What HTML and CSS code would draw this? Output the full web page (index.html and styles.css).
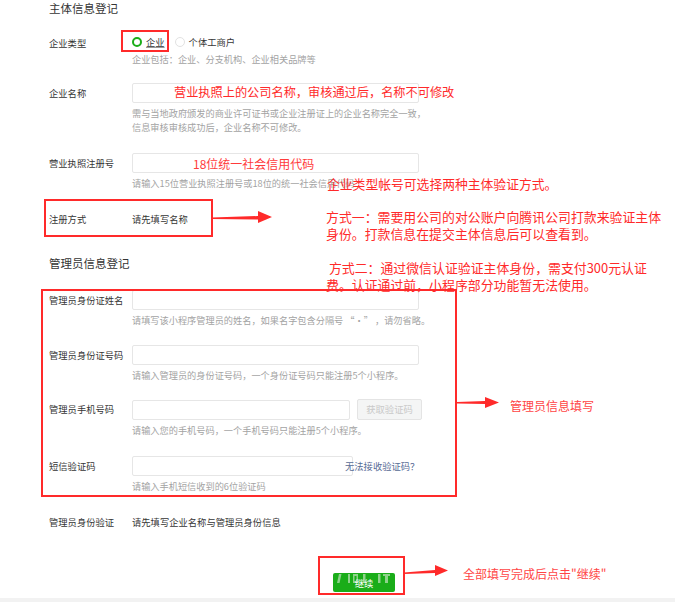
FILE: index.html
```html
<!DOCTYPE html>
<html lang="zh-CN">
<head>
<meta charset="utf-8">
<title>主体信息登记</title>
<link rel="stylesheet" href="styles.css">
</head>
<body>
<div class="page">
  <div class="form">
    <h2 class="sec-title">主体信息登记</h2>

    <div class="row row-type">
      <div class="label label-sm">企业类型</div>
      <div class="field">
        <div class="radios">
          <span class="radio radio-on"></span><span class="radio-text radio-text-on">企业</span>
          <span class="radio radio-off"></span><span class="radio-text">个体工商户</span>
        </div>
        <p class="hint hint-first">企业包括：企业、分支机构、企业相关品牌等</p>
      </div>
    </div>

    <div class="row row-name">
      <div class="label">企业名称</div>
      <div class="field">
        <div class="input"></div>
        <p class="hint">需与当地政府颁发的商业许可证书或企业注册证上的企业名称完全一致，<br>信息审核审核成功后，企业名称不可修改。</p>
      </div>
    </div>

    <div class="row">
      <div class="label">营业执照注册号</div>
      <div class="field">
        <div class="input"></div>
        <p class="hint">请输入15位营业执照注册号或18位的统一社会信用代码</p>
      </div>
    </div>

    <div class="row">
      <div class="label">注册方式</div>
      <div class="field"><div class="value">请先填写名称</div></div>
    </div>

    <h2 class="sec-title sec-title-2">管理员信息登记</h2>

    <div class="row row-admin">
      <div class="label">管理员身份证姓名</div>
      <div class="field">
        <div class="input"></div>
        <p class="hint">请填写该小程序管理员的姓名，如果名字包含分隔号 “·” ，请勿省略。</p>
      </div>
    </div>

    <div class="row row-admin2">
      <div class="label">管理员身份证号码</div>
      <div class="field">
        <div class="input"></div>
        <p class="hint">请输入管理员的身份证号码，一个身份证号码只能注册5个小程序。</p>
      </div>
    </div>

    <div class="row row-admin3">
      <div class="label">管理员手机号码</div>
      <div class="field">
        <div class="inline">
          <div class="input input-phone"></div>
          <div class="code-btn">获取验证码</div>
        </div>
        <p class="hint">请输入您的手机号码，一个手机号码只能注册5个小程序。</p>
      </div>
    </div>

    <div class="row">
      <div class="label">短信验证码</div>
      <div class="field">
        <div class="inline">
          <div class="input input-sms"></div>
          <a class="link">无法接收验证码？</a>
        </div>
        <p class="hint">请输入手机短信收到的6位验证码</p>
      </div>
    </div>

    <div class="row">
      <div class="label">管理员身份验证</div>
      <div class="field"><div class="value">请先填写企业名称与管理员身份信息</div></div>
    </div>

    <div class="actions">
      <div class="btn-go">
        <svg class="btn-noise" width="62" height="19" viewBox="0 0 62 19">
          <g fill="#8fd28b">
            <polygon points="6,1 8.5,1 6.5,10 4,10"/>
            <rect x="15" y="1" width="2" height="9"/>
            <rect x="20" y="1" width="5" height="9"/>
            <rect x="21.5" y="3" width="2" height="5" fill="#1aad19"/>
            <rect x="30" y="1" width="2.5" height="9"/>
            <rect x="45" y="1" width="2.5" height="9"/>
            <polygon points="50,1 57,1 57,3 55,3 55,10 52,10 52,3 50,3"/>
          </g>
        </svg>
        <span class="btn-text">继续</span>
      </div>
    </div>
  </div>
  <div class="band"></div>

  <!-- annotations -->
  <div class="mark mark-type"></div>
  <div class="mark mark-method"></div>
  <div class="mark mark-admin"></div>
  <div class="mark mark-btn"></div>

  <p class="note note-name">营业执照上的公司名称，审核通过后，名称不可修改</p>
  <p class="note note-code">18位统一社会信用代码</p>
  <p class="note note-kind">企业类型帐号可选择两种主体验证方式。</p>
  <p class="note note-way1">方式一：需要用公司的对公账户向腾讯公司打款来验证主体<br>身份。打款信息在提交主体信息后可以查看到。</p>
  <p class="note note-way2">&nbsp;方式二：通过微信认证验证主体身份，需支付300元认证<br>费。认证通过前，小程序部分功能暂无法使用。</p>
  <p class="note note-admin">管理员信息填写</p>
  <p class="note note-go">全部填写完成后点击"继续"</p>

  <svg class="arrow arrow-1" width="62" height="16" viewBox="0 0 62 16">
    <polygon points="0,7.5 46,6 46,1 60,7 46,13 46,9.5 0,9" fill="#ff2a2a"/>
  </svg>
  <svg class="arrow arrow-2" width="44" height="14" viewBox="0 0 44 14">
    <polygon points="0,6 28,5 28,1 42,6.5 28,12 28,8 0,7.5" fill="#ff2a2a"/>
  </svg>
  <svg class="arrow arrow-3" width="46" height="14" viewBox="0 0 46 14">
    <polygon points="0,8.5 31,6 31,1 44,6.5 31,12 31,9 0,10" fill="#ff2a2a"/>
  </svg>
</div>
</body>
</html>
```

FILE: styles.css
```css
* { box-sizing: border-box; }
html, body { margin: 0; padding: 0; background: #fff; }
body {
  font-family: "Noto Sans CJK SC", "Noto Sans", sans-serif;
  color: #353535;
  overflow: hidden;
}
.page {
  position: relative;
  width: 675px;
  height: 602px;
  overflow: hidden;
}
.form { padding-left: 49px; }

.sec-title {
  margin: 0;
  font-size: 11.5px;
  font-weight: normal;
  line-height: 16px;
  color: #353535;
}
.sec-title-2 { margin-top: 26px; }

.row {
  display: grid;
  grid-template-columns: 83px 1fr;
  margin-top: 19px;
}
.row-type { margin-top: 18px; }
.row-name { margin-top: 17px; }
.row-admin2 { margin-top: 18px; }
.row-admin3 { margin-top: 17px; }

.label {
  font-size: 9.3px;
  line-height: 20px;
  color: #353535;
  white-space: nowrap;
}
.label-sm { line-height: 18px; }
.value {
  font-size: 9.3px;
  line-height: 20px;
  color: #353535;
}

.radios {
  display: flex;
  align-items: center;
  height: 16px;
  font-size: 9.3px;
}
.radio {
  width: 10px;
  height: 10px;
  border-radius: 50%;
  flex: none;
}
.radio-on { border: 2.5px solid #1aad19; background: #fff; }
.radio-off { border: 1px solid #e2e2e2; background: #fff; margin-left: 10px; }
.radio-text { margin-left: 4px; color: #353535; }
.radio-text-on { text-decoration: underline; text-decoration-color: #999; }

.input {
  width: 287px;
  height: 20px;
  border: 1px solid #e6e6e6;
  border-radius: 2px;
  background: #fff;
}
.inline { display: flex; align-items: center; }
.input-phone { width: 218px; }
.input-sms { width: 221px; }
.code-btn {
  width: 65px;
  height: 21px;
  margin-left: 7px;
  border: 1px solid #e4e4e4;
  border-radius: 2px;
  background: #f4f5f5;
  color: #c9c9c9;
  font-size: 9.3px;
  line-height: 19px;
  text-align: center;
}
.link {
  margin-left: -8px;
  font-size: 9.3px;
  color: #576b95;
  white-space: nowrap;
}

.hint {
  margin: 3px 0 0;
  font-size: 9.2px;
  line-height: 14px;
  color: #a3a3a3;
  white-space: nowrap;
}
.hint-first { margin-top: 2px; }

.actions {
  margin-top: 41px;
  padding-left: 284px;
}
.btn-go {
  position: relative;
  display: flex;
  align-items: center;
  justify-content: center;
  width: 62px;
  height: 19px;
  border-radius: 2px;
  background: #1aad19;
  font-size: 9.3px;
  line-height: 19px;
}
.btn-noise { position: absolute; left: 0; top: 0; }
.btn-text {
  position: relative;
  top: 1px;
  color: #fff;
}
.band {
  position: absolute;
  left: 0;
  right: 0;
  bottom: 0;
  height: 4px;
  background: #f2f2f2;
}

/* annotation overlays */
.mark {
  position: absolute;
  border: 2px solid #ff2a2a;
}
.mark-type { left: 121px; top: 30px; width: 48px; height: 22px; }
.mark-method { left: 44px; top: 199px; width: 169px; height: 38px; }
.mark-admin { left: 41px; top: 289px; width: 416px; height: 208px; }
.mark-btn { left: 318px; top: 556px; width: 87px; height: 39px; }

.note {
  position: absolute;
  margin: 0;
  color: #ff2a2a;
  font-size: 13px;
  line-height: 17px;
  white-space: nowrap;
}
.note-name { left: 174px; top: 84px; font-size: 12.2px; }
.note-code { left: 193px; top: 155px; font-size: 12px; color: #ff3b3b; }
.note-kind { left: 327px; top: 175px; font-size: 12.8px; }
.note-way1 { left: 326px; top: 208px; font-size: 12.9px; }
.note-way2 { left: 326px; top: 259px; font-size: 12.9px; }
.note-admin { left: 510px; top: 397px; font-size: 12px; color: #ff4545; }
.note-go { left: 463px; top: 565px; font-size: 12px; color: #ff4545; }

.arrow { position: absolute; }
.arrow-1 { left: 212px; top: 210px; }
.arrow-2 { left: 457px; top: 396px; }
.arrow-3 { left: 404px; top: 564px; }
```
